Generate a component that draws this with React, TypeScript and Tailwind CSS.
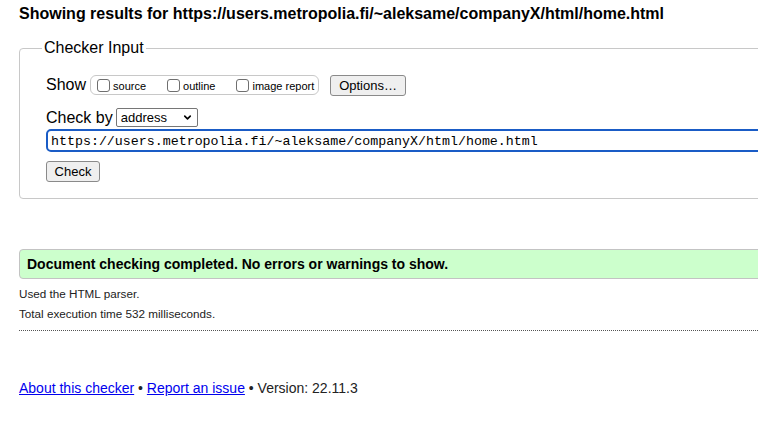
import { ChevronDown } from "lucide-react";

const url = "https://users.metropolia.fi/~aleksame/companyX/html/home.html";

function Box({ label }: { label: string }) {
  return (
    <label className="flex items-end">
      <span className="w-[13px] h-[13px] border border-[#6f6f6f] rounded-[3px] bg-white" />
      <span className="ml-[3px] text-[11px] leading-[11px]">{label}</span>
    </label>
  );
}

function GrayButton({ children, className = "" }: { children: React.ReactNode; className?: string }) {
  return (
    <button
      className={`h-[21px] px-[7px] border border-[#8a8a8a] rounded-[3px] bg-[#efefef] text-[13px] leading-none text-black ${className}`}
    >
      {children}
    </button>
  );
}

export default function App() {
  return (
    <div className="w-[758px] h-[446px] overflow-hidden bg-white text-black font-['Liberation_Sans',Arial,sans-serif]">
      <div className="w-[820px] pl-[19px]">
        <h2 className="pt-[4px] text-[16px] leading-[20px] font-bold">
          Showing results for {url}
        </h2>

        {/* checker input form */}
        <fieldset className="mt-[14px] border border-[#c8c8c8] rounded-[4px] pl-[26px] pr-4 pb-[15px]">
          <legend className="-ml-[4px] px-[2px] text-[16px] leading-[20px]">Checker Input</legend>

          <div className="flex items-center h-[22px] mt-[16px]">
            <span className="text-[16px] leading-none">Show</span>
            <div className="ml-[4px] flex items-center h-[20px] w-[229px] border border-[#c8c8c8] rounded-[6px] pl-[6px] gap-[21px]">
              <Box label="source" />
              <Box label="outline" />
              <Box label="image report" />
            </div>
            <GrayButton className="ml-[11px] w-[76px]">Options…</GrayButton>
          </div>

          <div className="flex items-center h-[21px] mt-[11px]">
            <span className="text-[16px] leading-none">Check by</span>
            <div className="ml-[3px] flex items-center justify-between w-[82px] h-[19px] border border-[#767676] rounded-[2px] pl-[4px] pr-[4px]">
              <span className="text-[13px] leading-none">address</span>
              <ChevronDown className="w-[11px] h-[11px]" strokeWidth={3.5} />
            </div>
          </div>

          <div className="mt-[1px] h-[23px] w-[760px] border-2 border-[#1a5cc6] rounded-[5px] flex items-center pl-[3px] pt-[2px]">
            <span className="font-['Liberation_Mono',monospace] text-[13.3px] leading-none">{url}</span>
          </div>

          <GrayButton className="mt-[9px] w-[54px]">Check</GrayButton>
        </fieldset>

        {/* result summary */}
        <div className="mt-[50px] h-[30px] border border-[#c3c3c3] rounded-[4px] bg-[#ccffcc] flex items-center pl-[7px]">
          <span className="text-[14px] font-bold leading-none">
            Document checking completed. No errors or warnings to show.
          </span>
        </div>

        <p className="mt-[5px] text-[11.7px] leading-[20px] text-[#222]">Used the HTML parser.</p>
        <p className="text-[11.7px] leading-[20px] text-[#222]">Total execution time 532 milliseconds.</p>
        <div className="mt-[6px] border-b border-dotted border-[#555]" />

        <p className="mt-[47px] text-[14px] leading-[20px] text-[#222]">
          <a href="#" className="text-[#0000ee] underline">About this checker</a>
          {" • "}
          <a href="#" className="text-[#0000ee] underline">Report an issue</a>
          {" • Version: 22.11.3"}
        </p>
      </div>
    </div>
  );
}
